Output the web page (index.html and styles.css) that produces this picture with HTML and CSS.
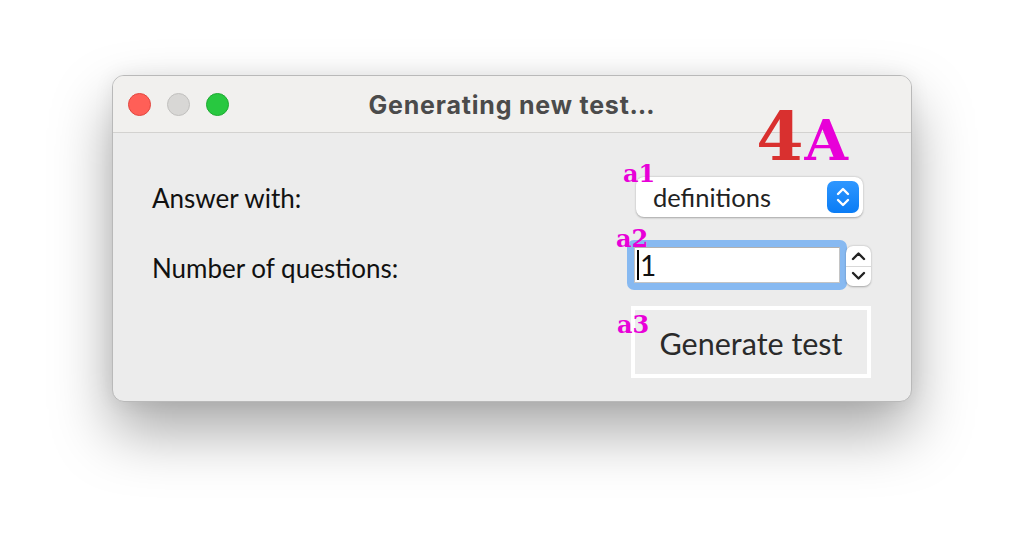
FILE: index.html
```html
<!DOCTYPE html>
<html>
<head>
<meta charset="utf-8">
<link rel="stylesheet" href="styles.css">
</head>
<body>
<div class="window">
  <div class="titlebar">
    <div class="lights">
      <span class="light red"></span>
      <span class="light gray"></span>
      <span class="light green"></span>
    </div>
    <div class="title">Generating new test…</div>
  </div>
  <div class="content">
    <div class="labels">
      <div class="label l1">Answer with:</div>
      <div class="label l2">Number of questions:</div>
    </div>
    <div class="controls">
      <div class="tag big"><span class="four">4</span><span class="a">A</span></div>
      <div class="popup">
        <span class="tag small t1">a1</span>
        <span class="popup-text">definitions</span>
        <span class="popup-icon">
          <svg width="32" height="32" viewBox="0 0 32 32"><path d="M11 13 L16 8 L21 13" fill="none" stroke="#fff" stroke-width="2.4" stroke-linecap="round" stroke-linejoin="round"/><path d="M11 19 L16 24 L21 19" fill="none" stroke="#fff" stroke-width="2.4" stroke-linecap="round" stroke-linejoin="round"/></svg>
        </span>
      </div>
      <div class="numrow">
        <span class="tag small t2">a2</span>
        <div class="ring"><div class="field"><span class="caret"></span>1</div></div>
        <div class="stepper">
          <div class="step up"><svg width="25" height="18" viewBox="0 0 25 18"><path d="M7 12 L12.5 6.5 L18 12" fill="none" stroke="#222" stroke-width="2.4" stroke-linecap="round" stroke-linejoin="round"/></svg></div>
          <div class="step down"><svg width="25" height="18" viewBox="0 0 25 18"><path d="M7 6 L12.5 11.5 L18 6" fill="none" stroke="#222" stroke-width="2.4" stroke-linecap="round" stroke-linejoin="round"/></svg></div>
        </div>
      </div>
      <div class="btnrow">
        <span class="tag small t3">a3</span>
        <div class="button">Generate test</div>
      </div>
    </div>
  </div>
</div>
</body>
</html>
```

FILE: styles.css
```css
html, body {
  margin: 0;
  padding: 0;
  background: #ffffff;
  width: 1024px;
  height: 550px;
  overflow: hidden;
  font-family: "Lato", "Open Sans", sans-serif;
}
.window {
  margin: 75px 0 0 112px;
  width: 800px;
  height: 327px;
  box-sizing: border-box;
  border-radius: 12px;
  background: #ececec;
  border: 1px solid #b9b9b9;
  box-shadow: 0 30px 60px rgba(0,0,0,0.34), 0 0 20px rgba(0,0,0,0.07);
  overflow: hidden;
  display: flex;
  flex-direction: column;
}
.titlebar {
  height: 56px;
  flex: none;
  background: #f1f0ee;
  border-bottom: 1px solid #d3d2d0;
  position: relative;
  display: flex;
  align-items: center;
}
.lights {
  display: flex;
  gap: 16px;
  padding-left: 15px;
}
.light {
  width: 23px;
  height: 23px;
  border-radius: 50%;
  box-sizing: border-box;
  display: block;
}
.red { background: #ff5f57; border: 1px solid #e2463f; }
.gray { background: #d8d7d5; border: 1px solid #c1c0be; }
.green { background: #28c840; border: 1px solid #1eaa32; }
.title {
  position: absolute;
  left: 0;
  right: 0;
  top: 0;
  bottom: 0;
  display: flex;
  align-items: center;
  justify-content: center;
  font-family: "Inter", "Liberation Sans", sans-serif;
  font-weight: bold;
  font-size: 25px;
  letter-spacing: 0.8px;
  color: #4b4b4b;
  padding-top: 1px;
}
.content {
  flex: 1;
  display: flex;
  justify-content: space-between;
  padding: 0 40px 0 39px;
}
.labels {
  padding-top: 49px;
  display: flex;
  flex-direction: column;
  gap: 38px;
}
.label {
  font-size: 26px;
  color: #111;
  line-height: 32px;
}
.controls {
  width: 244px;
  position: relative;
  padding-top: 44px;
  display: flex;
  flex-direction: column;
}
.tag {
  position: absolute;
  font-family: "DejaVu Serif", serif;
  font-weight: bold;
  line-height: 1;
}
.tag.small {
  color: #e800d8;
  font-size: 24px;
}
.big {
  right: 23px;
  top: -31px;
  display: flex;
  align-items: baseline;
}
.four { color: #d9302f; font-size: 68px; }
.a { color: #e800d8; font-size: 56px; margin-left: 1px; }
.popup {
  position: relative;
  margin-left: 9px;
  width: 227px;
  height: 40px;
  box-sizing: border-box;
  background: #fff;
  border-radius: 8px;
  box-shadow: 0 0.5px 2px rgba(0,0,0,0.3);
  display: flex;
  align-items: center;
  justify-content: space-between;
  padding: 0 4px 0 17px;
}
.t1 { left: -13px; top: -15px; }
.popup-text {
  font-size: 25.5px;
  color: #222;
}
.popup-icon {
  width: 32px;
  height: 32px;
  border-radius: 7px;
  background: linear-gradient(#2f97ff, #0a7cf5);
  display: block;
}
.popup-icon svg { display: block; }
.numrow {
  position: relative;
  margin-top: 23px;
  display: flex;
  align-items: flex-start;
}
.t2 { left: -11px; top: -13px; }
.ring {
  width: 220px;
  height: 50px;
  box-sizing: border-box;
  border: 7px solid #87b9f1;
  border-radius: 7px;
  background: #fff;
}
.field {
  height: 100%;
  box-sizing: border-box;
  border: 1px solid #c4c4c4;
  border-top-color: #b0b0b0;
  font-size: 28px;
  line-height: 34px;
  color: #111;
  padding-left: 2px;
  display: flex;
  align-items: center;
}
.caret {
  width: 2px;
  height: 30px;
  background: #000;
  margin-right: 1px;
}
.stepper {
  margin-left: -1px;
  margin-top: 6px;
  width: 25px;
  height: 40px;
  border-radius: 7px;
  background: #fff;
  box-shadow: 0 0.5px 2px rgba(0,0,0,0.3);
  display: flex;
  flex-direction: column;
  overflow: hidden;
}
.step {
  flex: 1;
  display: flex;
  align-items: center;
  justify-content: center;
}
.step.up { border-bottom: 1px solid #d8d8d8; }
.btnrow {
  position: relative;
  margin-top: 16px;
  padding-left: 4px;
}
.t3 { left: -10px; top: 7px; }
.button {
  width: 240px;
  height: 72px;
  box-sizing: border-box;
  border: 4px solid #fff;
  display: flex;
  align-items: center;
  justify-content: center;
  font-size: 30.5px;
  color: #2a2a2a;
  padding-top: 2px;
}
```
